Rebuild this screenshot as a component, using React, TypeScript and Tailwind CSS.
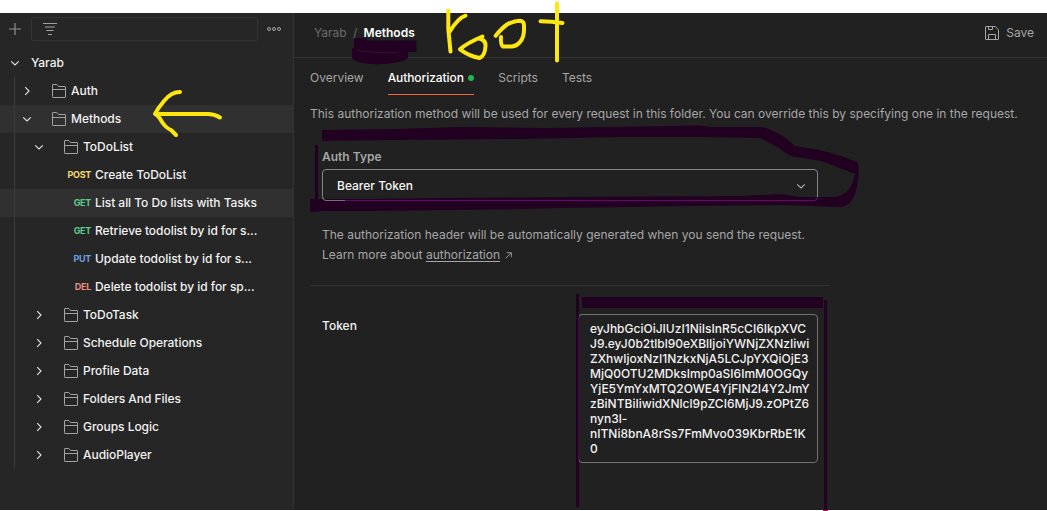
import React from "react";

type Row = {
  label: string;
  level?: 1 | 2;
  open?: boolean;
  method?: string;
  color?: string;
  active?: boolean;
};

const rows: Row[] = [
  { label: "Auth", level: 1 },
  { label: "Methods", level: 1, open: true, active: true },
  { label: "ToDoList", level: 2, open: true },
  { label: "Create ToDoList", method: "POST", color: "text-[#f5dc70]" },
  { label: "List all To Do lists with Tasks", method: "GET", color: "text-[#5fc98a]", active: true },
  { label: "Retrieve todolist by id for s...", method: "GET", color: "text-[#5fc98a]" },
  { label: "Update todolist by id for s...", method: "PUT", color: "text-[#6c9fe0]" },
  { label: "Delete todolist by id for sp...", method: "DEL", color: "text-[#e58b80]" },
  { label: "ToDoTask", level: 2 },
  { label: "Schedule Operations", level: 2 },
  { label: "Profile Data", level: 2 },
  { label: "Folders And Files", level: 2 },
  { label: "Groups Logic", level: 2 },
  { label: "AudioPlayer", level: 2 },
];

const tokenLines = [
  "eyJhbGciOiJIUzI1NiIsInR5cCI6IkpXVC",
  "J9.eyJ0b2tlbl90eXBlIjoiYWNjZXNzIiwi",
  "ZXhwIjoxNzI1NzkxNjA5LCJpYXQiOjE3",
  "MjQ0OTU2MDksImp0aSI6ImM0OGQy",
  "YjE5YmYxMTQ2OWE4YjFlN2I4Y2JmY",
  "zBiNTBiIiwidXNlcl9pZCI6MjJ9.zOPtZ6",
  "nyn3l-",
  "nITNi8bnA8rSs7FmMvo039KbrRbE1K",
  "0",
];

function Chevron({ open, color = "#e6e6e6" }: { open?: boolean; color?: string }) {
  return (
    <svg width="10" height="10" viewBox="0 0 10 10" fill="none" stroke={color} strokeWidth="1.1" className="shrink-0">
      <path d={open ? "M1.2 3.3 5 7 8.8 3.3" : "M3.2 1.2 7 5 3.2 8.8"} />
    </svg>
  );
}

function Folder() {
  return (
    <svg width="14" height="14" viewBox="0 0 14 14" fill="none" stroke="#a3a3a3" className="shrink-0">
      <path d="M.5 12.5V1Q.5.5 1 .5H4.8L6.6 2.5H13Q13.5 2.5 13.5 3V13Q13.5 13.5 13 13.5H1Q.5 13.5 .5 13ZM.5 5.5H13.5" />
    </svg>
  );
}

function TreeRow({ row }: { row: Row }) {
  return (
    <div className={`flex h-7 items-center ${row.active ? "bg-[#303030]" : ""}`}>
      {row.method ? (
        <>
          <span className={`w-[91px] shrink-0 text-right text-[9px] font-bold tracking-[-0.3px] ${row.color}`}>{row.method}</span>
          <span className="ml-1 whitespace-nowrap">{row.label}</span>
        </>
      ) : (
        <>
          <div className={`flex items-center ${row.level === 1 ? "w-[52px] pl-[22px]" : "w-[64px] pl-[34px]"}`}>
            <Chevron open={row.open} />
          </div>
          <Folder />
          <span className="ml-[5px] whitespace-nowrap">{row.label}</span>
        </>
      )}
    </div>
  );
}

function Sidebar() {
  return (
    <aside className="flex w-[294px] shrink-0 flex-col border-r border-[#333333] bg-[#262626] text-[12px] font-medium tracking-[-0.04px] text-[#f2f2f2]">
      <div className="flex h-8 items-center pl-[9px]">
        <svg width="12" height="12" viewBox="0 0 12 12" stroke="#8f8f8f" strokeWidth="1.2">
          <path d="M6 0V12M0 6H12" />
        </svg>
        <div className="ml-[10px] flex h-6 w-[227px] items-center rounded-[2px] border border-[#333333] pl-[11px]">
          <svg width="14" height="12" viewBox="0 0 14 12" stroke="#a0a0a0" strokeWidth="1">
            <path d="M0 .5H14M2 4H12M3.5 7.5H10.5M5 11.5H9" />
          </svg>
        </div>
        <svg width="14" height="6" viewBox="0 0 14 6" fill="none" stroke="#a6a6a6" strokeWidth="1" className="ml-[9px]">
          <circle cx="2" cy="3" r="1.5" />
          <circle cx="7" cy="3" r="1.5" />
          <circle cx="12" cy="3" r="1.5" />
        </svg>
      </div>
      <div className="mt-1 flex h-7 items-center pl-[10px]">
        <Chevron open />
        <span className="ml-[11px]">Yarab</span>
      </div>
      <div className="relative">
        {rows.map((row) => (
          <TreeRow key={row.label} row={row} />
        ))}
        <div className="absolute top-0 left-[14px] h-full w-px bg-[#3d3d3d]" />
      </div>
    </aside>
  );
}

function Main() {
  return (
    <main className="flex min-w-0 flex-1 flex-col bg-[#212121] text-[12px] text-[#a6a6a6]">
      <header className="flex h-[45px] items-center justify-between border-b border-[#333333] pr-[13px] pb-[5px] pl-5">
        <div className="flex">
          <span className="text-[#6b6b6b]">Yarab</span>
          <span className="mx-[6.3px] text-[#6b6b6b]">/</span>
          <span className="font-semibold text-white">Methods</span>
        </div>
        <div className="flex items-center gap-[7px]">
          <svg width="14" height="14" viewBox="0 0 14 14" fill="none" stroke="#a6a6a6">
            <path d="M1 .5H10.2L13.5 3.8V13Q13.5 13.5 13 13.5H1Q.5 13.5 .5 13V1Q.5.5 1 .5ZM3.5 .5V3.5H7.5V.5M3.5 13.5V8.5H10.5V13.5" />
          </svg>
          <span>Save</span>
        </div>
      </header>
      <nav className="flex h-9 pt-[11px] pl-4">
        <span>Overview</span>
        <span className="ml-6 flex h-[26px] w-[86px] justify-between border-b border-[#f0693a] font-medium tracking-[-0.08px] text-white">
          Authorization
          <i className="mt-[6px] size-[6px] rounded-full bg-[#1cb854]" />
        </span>
        <span className="ml-[24.6px]">Scripts</span>
        <span className="ml-6">Tests</span>
      </nav>
      <p className="mt-[11px] pl-4 whitespace-nowrap">
        This authorization method will be used for every request in this folder. You can override this by specifying one in the request.
      </p>
      <section className="mt-[25px] flex w-[496px] flex-col self-start ml-7">
        <span className="font-semibold">Auth Type</span>
        <div className="mt-[3px] flex h-8 items-center justify-between rounded-[4px] border border-[#858585] pt-px pr-[11px] pl-[14px] font-medium text-[#f5f5f5]">
          Bearer Token
          <Chevron open color="#b0b0b0" />
        </div>
        <div className="mt-6 leading-5">
          <p className="whitespace-nowrap">The authorization header will be automatically generated when you send the request.</p>
          <p className="flex items-center">
            Learn more about&nbsp;<span className="underline underline-offset-2">authorization</span>
            <svg width="7" height="7" viewBox="0 0 8 8" fill="none" stroke="#a6a6a6" className="ml-[5px]">
              <path d="M.7 7.3 7 1M2 .8H7.2V6" />
            </svg>
          </p>
        </div>
      </section>
      <div className="mt-5 ml-4 w-[519px] border-t border-[#333333]" />
      <section className="mt-7 ml-7 flex w-[496px] justify-between font-medium text-[#f2f2f2]">
        <span className="mt-1 leading-4">Token</span>
        <div className="h-[149px] w-[240px] rounded-[4px] border border-[#6e7270] pt-[6px] pl-[11px] leading-[15px]">
          {tokenLines.map((line) => (
            <div key={line} className="whitespace-nowrap">{line}</div>
          ))}
        </div>
      </section>
    </main>
  );
}

function Ink() {
  return (
    <svg className="pointer-events-none absolute inset-0" width="1047" height="511" viewBox="0 0 1047 511" fill="none">
      <g fill="#220022">
        <path d="M354 38H367V40.500H416.500V52H408V57Q408 60 399 62Q380 66 362 63Q352 61 352 57V48H354Z" />
        <path d="M322 130 395 129 460 127 545 128 670 126 700 125.500 710 127H759Q766 127 773 131Q785 136 795 146L815 149Q838 154 857 162Q860 166 858 180Q855 207 840 207L785 205 690 206 565 208 520 209 370 211H324L310 212V199L370 199 440 198 560 197 740 196 780 194 800 197H833Q851 196 855 174L837 167Q820 159 794 157Q787 155 779 148L760 138 700 137 620 137 520 139 390 140 322 141Z" />
        <path d="M315 145H318V199H315ZM576 294H579V507H576ZM582 297H823V308H582ZM824 300H827V510H824Z" />
      </g>
      <path d="M357 50Q370 53.500 398 52.500" stroke="#3a103a" />
      <path d="M322.500 196V197Q322.500 200.500 326 200.500H345" stroke="#777177" />
      <path d="M345 200.500H814Q817.500 200.500 817.500 197" stroke="#650868" />
      <path d="M817.500 193V197" stroke="#858585" />
      <path d="M578.500 318V460" stroke="#4b074d" />
      <g stroke="#ffe70f" strokeWidth="4" strokeLinecap="round" strokeLinejoin="round">
        <path d="M180 92Q171 92 164 101Q158 108 155 114H208Q214 114 220 117.500M155 114Q159 116 162 122Q166 128 171 130L176 135" />
        <path d="M448.300 10.500V29L450.500 51.500M449.500 32Q458 18 465.500 15.700" />
        <path d="M482.500 36.500Q467 43 460 49.300Q469 56 479.500 58Q485 56 485.500 46Q486 40 479 38.500" />
        <path d="M495.700 35.700Q502 28 507 24.500Q514 20.700 520 20.700Q524.500 21 524 27Q524.500 37 520 42Q517 46 512 46.500H503Q500.500 45 501 37" />
        <path d="M557 3.500V60.500M540.500 21.200Q552 21.200 562.500 23" />
      </g>
      <path d="M823 510.500H828" stroke="#d00060" />
    </svg>
  );
}

export default function App() {
  return (
    <div className="relative flex h-[511px] w-[1047px] overflow-hidden bg-white pt-[13px] pb-px font-['Inter',sans-serif] leading-[18px]">
      <Sidebar />
      <Main />
      <Ink />
    </div>
  );
}
